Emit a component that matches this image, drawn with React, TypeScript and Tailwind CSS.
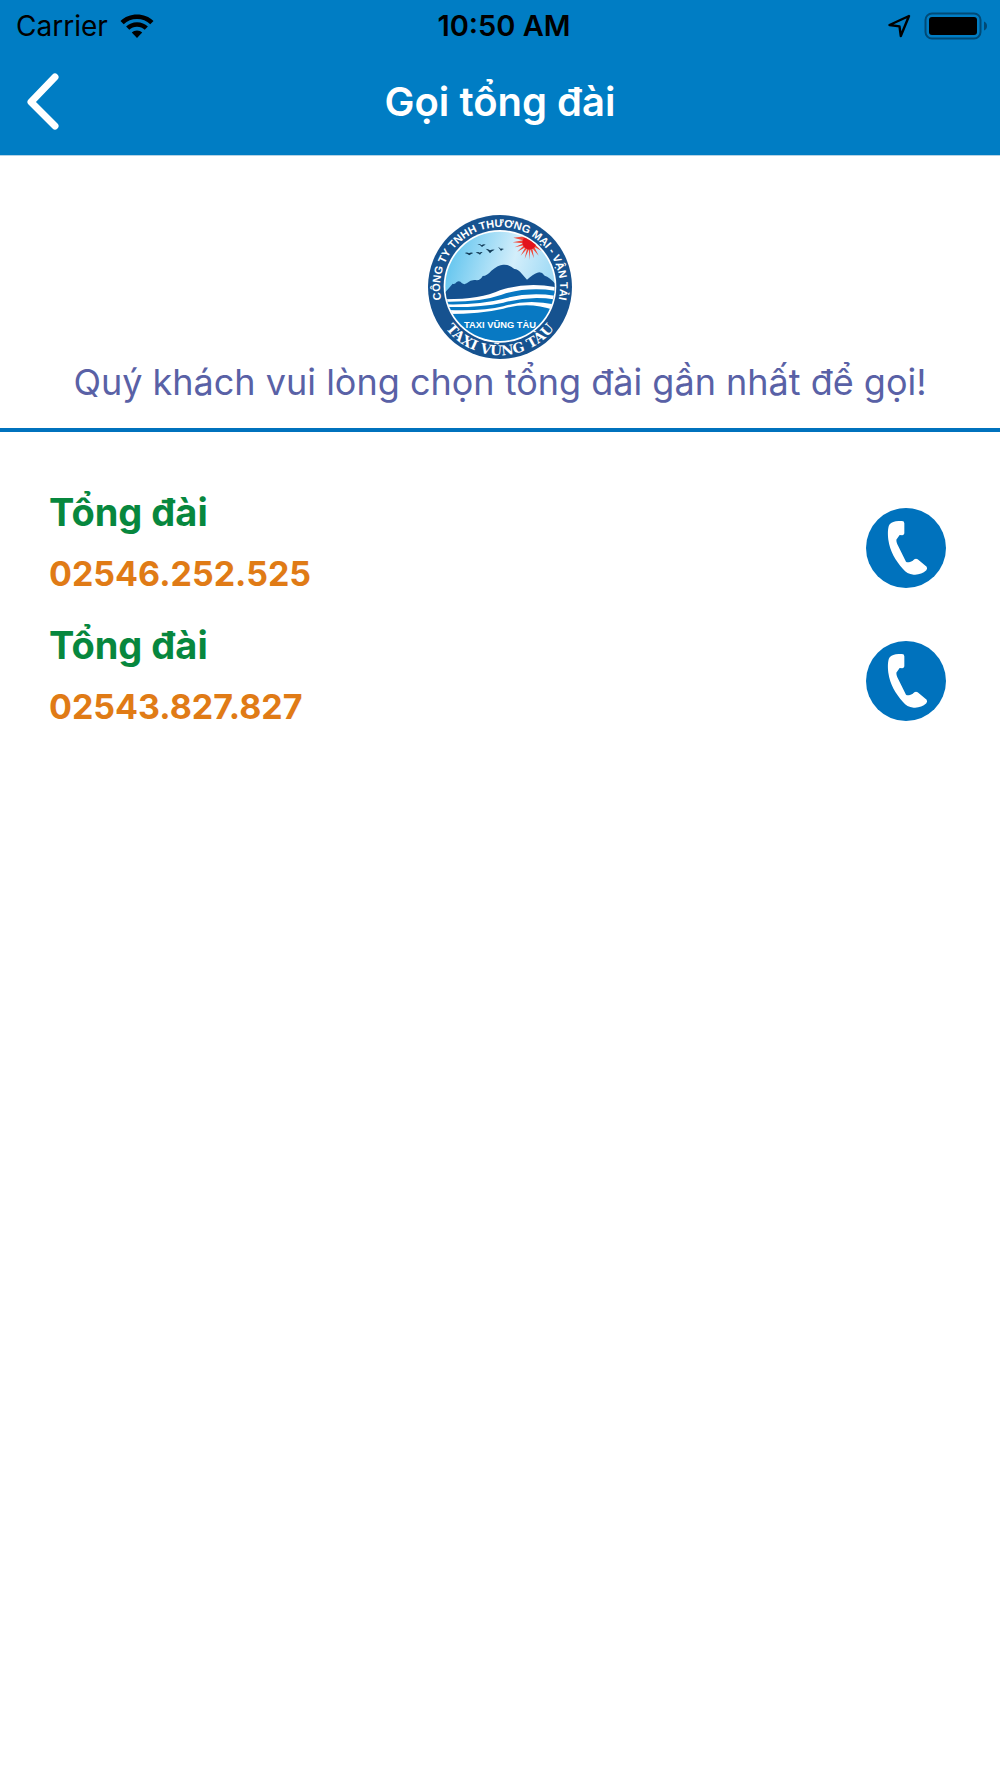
const hotlines = [
  { id: 1, name: 'Tổng đài', phone: '02546.252.525' },
  { id: 2, name: 'Tổng đài', phone: '02543.827.827' },
];

function WifiIcon() {
  return (
    <svg viewBox="0 0 34 25" className="w-[34px] h-[25px]" aria-hidden="true">
      <path d="M17 0.5C10.600 0.500 4.800 2.900 0.500 6.900L3.700 10.200C7.200 7 11.900 5.100 17 5.100S26.800 7 30.300 10.200L33.500 6.900C29.200 2.900 23.400 0.500 17 0.500Z" />
      <path d="M17 8.300C12.700 8.300 8.900 9.900 6.100 12.500L9.300 15.800C11.300 13.900 14 12.800 17 12.800S22.700 13.900 24.700 15.800L27.900 12.500C25.100 9.900 21.300 8.300 17 8.300Z" />
      <path d="M17 16.400C15 16.400 13.100 17.100 11.800 18.400L17 24L22.200 18.400C20.900 17.100 19 16.400 17 16.400Z" />
    </svg>
  );
}

function LocationIcon() {
  return (
    <svg viewBox="0 0 24 24" className="w-6 h-6" fill="none" stroke="#000" strokeWidth="2.4" strokeLinejoin="round" aria-hidden="true">
      <path d="M21 2L1.500 11L11.500 12.400L12.800 22Z" />
    </svg>
  );
}

function BatteryIcon() {
  return (
    <svg viewBox="0 0 64 28" className="w-16 h-7" aria-hidden="true">
      <rect x="1.500" y="1.500" width="55" height="25" rx="6.500" fill="none" stroke="#004a76" strokeWidth="2" />
      <rect x="5" y="5" width="48" height="18" rx="3" />
      <path d="M60 9.500C62 10.300 63 12 63 14S62 17.700 60 18.500Z" fill="#004a76" />
    </svg>
  );
}

function PhoneIcon() {
  return (
    <svg viewBox="0 0 240 240" className="w-20 h-20" aria-hidden="true">
      <circle cx="120" cy="120" r="120" fill="#0072bd" />
      <path
        fill="#fff"
        d="M70 50C76 43 86 39 98 39H108Q115 39 115 46V76Q115 81 109 82L101 81Q96 88 91 95Q91 103 94 109L120 161Q124 164 132 162Q140 160 145 154Q150 151 155 154L182 176Q185 181 181 187C170 197 158 201 143 200C129 199 119 193 111 183C88 156 72 130 67 95C65 77 65 60 70 50Z"
      />
    </svg>
  );
}

function Logo() {
  return (
    <svg viewBox="24 22 432 432" className="w-36 h-36" role="img" aria-label="Taxi Vũng Tàu">
      <defs>
        <linearGradient id="sky" x1="0" y1="0" x2="1" y2="0.3">
          <stop offset="0" stopColor="#4dbdec" />
          <stop offset="0.65" stopColor="#d3eefb" />
          <stop offset="1" stopColor="#9fdaf5" />
        </linearGradient>
        <clipPath id="disc">
          <circle cx="240" cy="236" r="164" />
        </clipPath>
        <path id="top-arc" d="M84 328A180 180 0 1 1 396 328" />
        <path id="bottom-arc" d="M37 272A206 206 0 0 0 443 272" />
      </defs>
      <circle cx="240" cy="238" r="216" fill="#16528f" />
      <circle cx="240" cy="236" r="169" fill="#fff" />
      <g clipPath="url(#disc)">
        <rect x="70" y="60" width="340" height="350" fill="url(#sky)" />
        <path
          fill="#f04a3c"
          d="M327 84L280 90L309 98L278 104L310 107L284 119L312 113L292 132L316 119L302 144L321 123L314 153L327 125L328 157L331 125L342 152L337 122L356 144L343 118L367 131L347 112L374 117L349 105L378 104L349 99L372 92Z"
        />
        <path fill="#e2131c" d="M312 91Q336 92 349 101A21 21 0 1 1 312 91Z" />
        <g fill="#123a56">
          <path d="M172 109Q181 108 185 113Q190 108 197 111Q190 113 186 118Q182 112 172 109Z" />
          <path d="M134 136Q142 133 147 137Q152 133 160 136Q153 138 148 143Q143 138 134 136Z" />
          <path d="M167 135Q175 131 179 135Q183 131 188 134Q183 137 180 141Q176 137 167 135Z" />
          <path d="M197 123Q205 124 210 128Q217 124 224 126Q215 130 210 137Q205 129 197 123Z" />
          <path d="M234 117Q239 120 242 123Q247 121 252 124Q246 126 243 130Q239 123 234 117Z" />
        </g>
        <path
          fill="#14508f"
          d="M70 260Q88 240 98 228Q104 231 110 223Q119 217 126 227Q133 232 140 227Q154 215 166 217Q181 220 188 205Q202 204 214 189Q236 170 251 171Q268 170 283 184Q294 184 306 199L321 216Q339 200 352 195Q364 190 374 204Q391 209 410 234V280H70Z"
        />
        <path fill="#fff" d="M70 275Q180 276 240 248Q320 222 410 239V410H70Z" />
        <path fill="#0879c3" d="M74 282Q180 284 245 261Q322 236 410 250V265Q325 251 245 275Q180 292 78 290Z" />
        <path fill="#0879c3" d="M78 298Q180 300 250 285Q330 262 410 276V292Q325 272 250 296Q190 311 84 307Z" />
        <path fill="#0879c3" d="M84 319Q180 319 250 303Q325 280 402 307V410H80Z" />
      </g>
      <text x="240" y="360" textAnchor="middle" fill="#fff" fontSize="28" fontWeight="700" className="font-['Liberation_Sans',sans-serif]">
        TAXI VŨNG TÀU
      </text>
      <text fill="#fff" fontSize="33" fontWeight="700" textAnchor="middle" className="font-['Liberation_Sans',sans-serif]">
        <textPath href="#top-arc" startOffset="50%">CÔNG TY TNHH THƯƠNG MẠI - VẬN TẢI</textPath>
      </text>
      <text fill="#fff" fontSize="41" fontWeight="700" textAnchor="middle" className="font-['DejaVu_Serif',serif]">
        <textPath href="#bottom-arc" startOffset="50%">TAXI VŨNG TÀU</textPath>
      </text>
    </svg>
  );
}

export default function App() {
  return (
    <div className="min-h-screen bg-white font-['Inter',sans-serif]">
      <header className="bg-[#007dc4] border-b border-[#b5d3e6]">
        <div className="grid grid-cols-3 items-center h-12 pt-1 px-3 text-[28px] leading-10 text-black">
          <div className="flex items-center gap-3 pl-1">
            <span>Carrier</span>
            <WifiIcon />
          </div>
          <span className="pl-2 text-center text-[29px] font-semibold">10:50 AM</span>
          <div className="flex items-center justify-end gap-3">
            <LocationIcon />
            <BatteryIcon />
          </div>
        </div>

        <div className="grid grid-cols-[80px_1fr_80px] items-center h-[107px]">
          <button type="button" aria-label="Quay lại" className="pl-6 h-20 cursor-pointer">
            <svg viewBox="0 0 36 60" className="w-9 h-[60px]" fill="none" stroke="#fff" strokeWidth="7" strokeLinecap="round" strokeLinejoin="round">
              <path d="M31 5L7 30L31 54" />
            </svg>
          </button>
          <h1 className="text-center text-[40px] leading-[52px] font-semibold text-white">Gọi tổng đài</h1>
        </div>
      </header>

      <main>
        <section className="flex flex-col items-center pt-[59px] pb-[22px] border-b-4 border-[#0072bd]">
          <Logo />
          <p className="text-center text-[36px] leading-[47px] text-[#5961a6]">
            Quý khách vui lòng chọn tổng đài gần nhất để gọi!
          </p>
        </section>

        <ul className="pt-[49px] pl-[49px] pr-[54px]">
          {hotlines.map((line) => (
            <li key={line.id} className="flex items-center justify-between h-[133px]">
              <div className="pb-1.5">
                <h2 className="text-[38px] leading-[58px] font-bold text-[#07873e]">{line.name}</h2>
                <p className="text-[34px] leading-[66px] font-bold text-[#e07b16]">{line.phone}</p>
              </div>
              <button type="button" aria-label={`Gọi ${line.phone}`} className="cursor-pointer rounded-full">
                <PhoneIcon />
              </button>
            </li>
          ))}
        </ul>
      </main>
    </div>
  );
}
